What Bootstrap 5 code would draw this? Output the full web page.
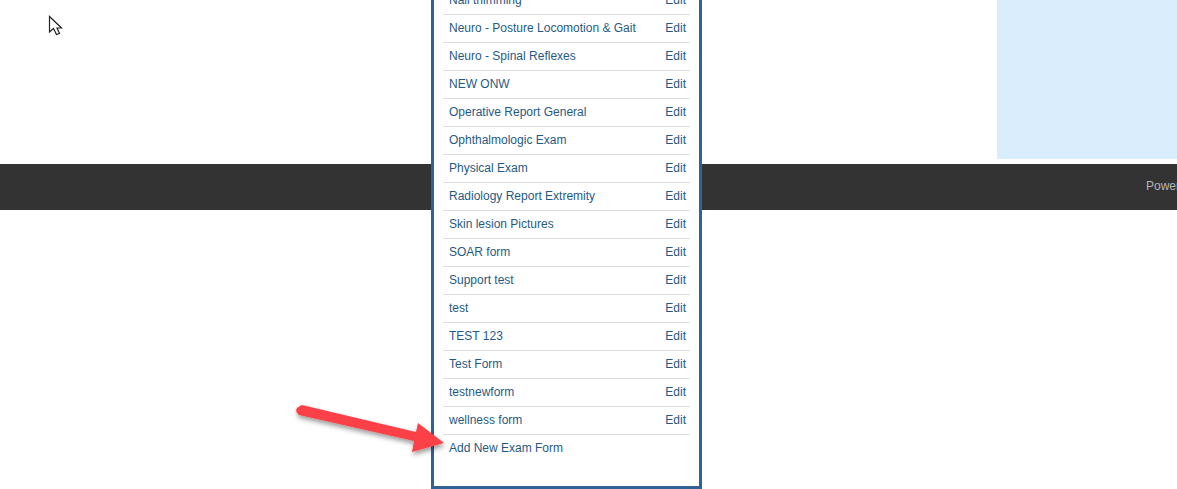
<!DOCTYPE html>
<html lang="en">
<head>
<meta charset="utf-8">
<title>Exam Forms</title>
<link href="https://cdn.jsdelivr.net/npm/bootstrap@5.3.0/dist/css/bootstrap.min.css" rel="stylesheet">
<style>
html,body{height:489px;overflow:hidden;background:#fff;}
body{font-family:"Liberation Sans",Arial,sans-serif;font-size:12px;position:relative;}
.top-area{height:164px;}
.side-panel{width:180px;height:159px;background:#d9edfc;}
.foot-bar{height:46px;background:#333;color:#b5b5b5;font-size:12px;overflow:hidden;white-space:nowrap;padding-left:1146px;line-height:44px;}
.form-popup{position:absolute;left:431px;top:0;width:271px;height:489px;border:solid #2f6295;border-width:0 3px 3px 3px;background:#fff;overflow:hidden;padding:0 9px 0 9px;}
.form-list{height:486px;}
.form-row{height:28px;border-bottom:1px solid #ddd;padding:0 4px 0 6px;}
.form-row:last-child{border-bottom:0;}
.form-row a{color:#1f5a85;text-decoration:none;line-height:27px;}
.add-row{height:51px;}
.red-arrow{position:absolute;left:285px;top:395px;}
.cursor-mark{position:absolute;left:47px;top:14px;}
</style>
</head>
<body>
<div class="top-area d-flex justify-content-end"><div class="side-panel"></div></div>
<div class="foot-bar">Powered by</div>
<div class="form-popup">
  <div class="form-list d-flex flex-column justify-content-end">
    <div class="form-row d-flex justify-content-between flex-shrink-0"><a href="#">Nail thimming</a><a href="#">Edit</a></div>
    <div class="form-row d-flex justify-content-between flex-shrink-0"><a href="#">Neuro - Posture Locomotion &amp; Gait</a><a href="#">Edit</a></div>
    <div class="form-row d-flex justify-content-between flex-shrink-0"><a href="#">Neuro - Spinal Reflexes</a><a href="#">Edit</a></div>
    <div class="form-row d-flex justify-content-between flex-shrink-0"><a href="#">NEW ONW</a><a href="#">Edit</a></div>
    <div class="form-row d-flex justify-content-between flex-shrink-0"><a href="#">Operative Report General</a><a href="#">Edit</a></div>
    <div class="form-row d-flex justify-content-between flex-shrink-0"><a href="#">Ophthalmologic Exam</a><a href="#">Edit</a></div>
    <div class="form-row d-flex justify-content-between flex-shrink-0"><a href="#">Physical Exam</a><a href="#">Edit</a></div>
    <div class="form-row d-flex justify-content-between flex-shrink-0"><a href="#">Radiology Report Extremity</a><a href="#">Edit</a></div>
    <div class="form-row d-flex justify-content-between flex-shrink-0"><a href="#">Skin lesion Pictures</a><a href="#">Edit</a></div>
    <div class="form-row d-flex justify-content-between flex-shrink-0"><a href="#">SOAR form</a><a href="#">Edit</a></div>
    <div class="form-row d-flex justify-content-between flex-shrink-0"><a href="#">Support test</a><a href="#">Edit</a></div>
    <div class="form-row d-flex justify-content-between flex-shrink-0"><a href="#">test</a><a href="#">Edit</a></div>
    <div class="form-row d-flex justify-content-between flex-shrink-0"><a href="#">TEST 123</a><a href="#">Edit</a></div>
    <div class="form-row d-flex justify-content-between flex-shrink-0"><a href="#">Test Form</a><a href="#">Edit</a></div>
    <div class="form-row d-flex justify-content-between flex-shrink-0"><a href="#">testnewform</a><a href="#">Edit</a></div>
    <div class="form-row d-flex justify-content-between flex-shrink-0"><a href="#">wellness form</a><a href="#">Edit</a></div>
    <div class="form-row add-row d-flex flex-shrink-0"><a href="#">Add New Exam Form</a></div>
  </div>
</div>
<svg class="red-arrow" width="175" height="75" viewBox="0 0 175 75" aria-hidden="true">
  <defs><filter id="sh" x="-10%" y="-20%" width="125%" height="150%"><feDropShadow dx="1" dy="3" stdDeviation="2.5" flood-color="#000" flood-opacity=".4"/></filter></defs>
  <path filter="url(#sh)" d="M17 10 L131 37 L133 28 L159 48 L127 57 L129 46 L14 20 Q7 14 17 10 Z" fill="#fb4146"/>
</svg>
<svg class="cursor-mark" width="18" height="24" viewBox="0 0 18 24" aria-hidden="true">
  <path d="M2.5 2.5 V18 L6.5 14.5 L9.5 20.5 L12.5 19.5 L10 14 H14.5 Z" fill="#fff" stroke="#222" stroke-width="1.2"/>
</svg>
<script src="https://cdn.jsdelivr.net/npm/bootstrap@5.3.0/dist/js/bootstrap.bundle.min.js"></script>
</body>
</html>
